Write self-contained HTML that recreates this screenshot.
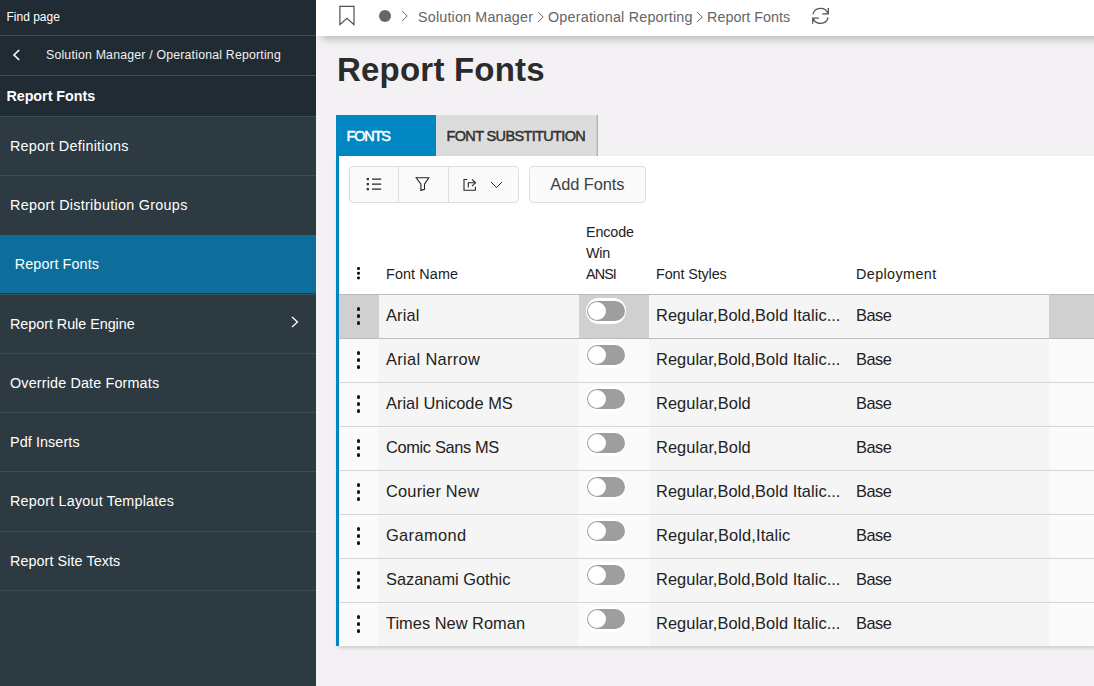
<!DOCTYPE html>
<html lang="en">
<head>
<meta charset="utf-8">
<title>Report Fonts</title>
<style>
*{box-sizing:border-box;margin:0;padding:0}
html,body{width:1094px;height:686px;overflow:hidden}
body{position:relative;background:#f3f1f4;font-family:"Liberation Sans",sans-serif;color:#2b2b2b}
.abs{position:absolute}
/* sidebar */
#nav{z-index:5;position:absolute;left:0;top:0;width:316px;height:686px;background:#2d3a42;color:#fff}
#nav .top{position:absolute;left:0;top:0;width:316px;height:116px;background:#212b33}
#nav .ln{position:absolute;left:0;width:316px;height:1px;background:#3a4c56}
#nav .find{position:absolute;left:6.5px;top:10px;font-size:12px;line-height:14px;color:#fff}
#nav .crumb{position:absolute;left:46px;top:46px;font-size:12.3px;line-height:18px;white-space:nowrap;color:#f0f0f0;letter-spacing:.2px}
#nav .ttl{position:absolute;left:6.4px;top:87px;font-size:14.35px;line-height:18px;font-weight:bold;white-space:nowrap;letter-spacing:-.04px}
#nav .it{position:absolute;left:0;width:316px;height:59px;font-size:14.35px;line-height:20px;white-space:nowrap}
#nav .it span{position:absolute;left:10px;top:20px}
#nav .it.act{background:#0d6e9c}
#nav .it.act span{left:14.8px;top:19px}
/* top bar */
#bar{position:absolute;left:316px;top:0;width:778px;height:36px;background:#fff;box-shadow:6px 3px 8px rgba(0,0,0,.25)}
#bar .bc{position:absolute;top:8px;font-size:14.35px;line-height:18px;color:#666;white-space:nowrap;letter-spacing:.25px}
h1{position:absolute;left:337px;top:50px;font-size:33px;line-height:40px;font-weight:bold;color:#2b2b2b;white-space:nowrap;letter-spacing:.21px}
/* tabs */
.tab{position:absolute;top:115px;height:41px;font-size:14.5px;line-height:18px;font-weight:normal;-webkit-text-stroke:.5px currentColor;white-space:nowrap}
.tab span{position:absolute;top:12.4px}
#t1{left:336px;width:100px;background:#0087c2;color:#fff}
#t2{left:436px;width:162px;background:#dcdcdc;color:#333;border-right:1px solid #b4b4b4;box-shadow:inset -1px 0 0 #cdcdcd}
#panel{position:absolute;left:336px;top:156px;width:758px;height:490px;background:#fff;border-left:3px solid #0087c2;box-shadow:2px 2px 4px rgba(0,0,0,.16)}
.btn{position:absolute;top:166px;height:37px;background:#fafafa;border:1px solid #dedede;border-radius:4px}
.btn i{position:absolute;top:0;width:1px;height:35px;background:#dedede}
#add{font-size:16.4px;letter-spacing:-.08px;line-height:20px;color:#404040;white-space:nowrap}
#add span{position:absolute;left:20.3px;top:6.7px}
.th{position:absolute;font-size:14.35px;line-height:21px;color:#222;white-space:nowrap}
.row{position:absolute;left:339px;width:755px;height:44px;background:#f5f5f5;border-top:1px solid #d6d6d6;font-size:16.4px;line-height:20px;white-space:nowrap;color:#222}
.row .k{position:absolute;left:0;top:0;width:40px;height:43px;background:#fafafa}
.row .r{position:absolute;left:710px;top:0;width:45px;height:43px;background:#fafafa}
.row .g{position:absolute;left:240px;top:0;width:70px;height:43px;background:#fafafa}
.row.sel,.row.sel+.row{border-top-color:#bcbcbc}
.row.sel .k,.row.sel .r,.row.sel .g{background:#d0d0d0}
.row b{position:absolute;font-weight:normal;top:10px}
.row em{font-style:normal;letter-spacing:0}
.row .n{left:47px}.row .s{left:317px}.row .d{left:517px;letter-spacing:-.5px}
.dots{position:absolute;left:17.7px;top:12.3px;width:3.8px;height:18px}
.dots u{position:absolute;left:0;width:3.8px;height:3.8px;border-radius:50%;background:#111}
.tg{position:absolute;left:247px;top:3.2px;width:40px;height:25.6px;border-radius:12.8px;background:#fff}
.tg:before{content:"";position:absolute;left:1px;top:2.8px;width:38px;height:20px;border-radius:10px;background:#9e9e9e}
.tg:after{content:"";position:absolute;left:1.8px;top:3.6px;width:18.4px;height:18.4px;border-radius:50%;background:#fff}
</style>
</head>
<body>
<div id="nav">
  <div class="top"></div>
  <div class="find">Find page</div>
  <div class="ln" style="top:35px"></div>
  <svg class="abs" style="left:12px;top:49px" width="9" height="12" viewBox="0 0 9 12"><path d="M7.2 1 L2 6 L7.2 11" fill="none" stroke="#fff" stroke-width="1.6"/></svg>
  <div class="crumb">Solution Manager / Operational Reporting</div>
  <div class="ln" style="top:75px"></div>
  <div class="ttl">Report Fonts</div>
  <div class="it" style="top:116px"><span style="letter-spacing:0.26px">Report Definitions</span></div>
  <div class="it" style="top:175px"><span style="letter-spacing:0.3px">Report Distribution Groups</span></div>
  <div class="it act" style="top:235px;height:58px"><span style="letter-spacing:.11px">Report Fonts</span></div>
  <div class="it" style="top:294px"><span style="letter-spacing:-0.03px">Report Rule Engine</span></div>
  <div class="it" style="top:353px"><span style="letter-spacing:0.16px">Override Date Formats</span></div>
  <div class="it" style="top:412px"><span style="letter-spacing:0.1px">Pdf Inserts</span></div>
  <div class="it" style="top:471px"><span style="letter-spacing:0.21px">Report Layout Templates</span></div>
  <div class="it" style="top:531px"><span style="letter-spacing:0.08px">Report Site Texts</span></div>
  <div class="ln" style="top:116px"></div>
  <div class="ln" style="top:175px"></div>
  <div class="ln" style="top:294px"></div>
  <div class="ln" style="top:353px"></div>
  <div class="ln" style="top:412px"></div>
  <div class="ln" style="top:471px"></div>
  <div class="ln" style="top:531px"></div>
  <div class="ln" style="top:590px"></div>
  <svg class="abs" style="left:290px;top:315px" width="10" height="14" viewBox="0 0 10 14"><path d="M2 2 L7.5 7 L2 12" fill="none" stroke="#fff" stroke-width="1.3"/></svg>
</div>

<div id="bar">
  <svg class="abs" style="left:22px;top:4px" width="18" height="24" viewBox="0 0 18 24"><path d="M1.9 2.3 H16 V20.6 L8.95 14.2 L1.9 20.6 Z" fill="none" stroke="#505050" stroke-width="1.2" stroke-linejoin="miter"/></svg>
  <div class="abs" style="left:62.5px;top:9.8px;width:12.5px;height:12.5px;border-radius:50%;background:#666"></div>
  <svg class="abs chv" style="left:85px;top:10px" width="8" height="12" viewBox="0 0 8 12"><path d="M1.2 1.3 L6.2 6 L1.2 10.7" fill="none" stroke="#666" stroke-width="1"/></svg>
  <div class="bc" style="left:102.1px;letter-spacing:.16px">Solution Manager</div>
  <svg class="abs chv" style="left:220.5px;top:11px" width="8" height="12" viewBox="0 0 8 12"><path d="M1.2 1.3 L6.2 6 L1.2 10.7" fill="none" stroke="#666" stroke-width="1"/></svg>
  <div class="bc" style="left:232px;letter-spacing:.21px">Operational Reporting</div>
  <svg class="abs chv" style="left:380px;top:11px" width="8" height="12" viewBox="0 0 8 12"><path d="M1.2 1.3 L6.2 6 L1.2 10.7" fill="none" stroke="#666" stroke-width="1"/></svg>
  <div class="bc" style="left:391px;letter-spacing:.03px">Report Fonts</div>
  <svg class="abs" style="left:495px;top:7px" width="19" height="18" viewBox="0 0 19 18"><path d="M1.89 7.3 A7.8 7.5 0 0 1 16.97 6.8 M17.3 1.1 V6.85 H11.1 M17.11 10.5 A7.8 7.5 0 0 1 2.03 11 M1.7 16.8 V11.1 H7.9" fill="none" stroke="#555" stroke-width="1.25"/></svg>
</div>

<h1>Report Fonts</h1>

<div class="tab" id="t1"><span style="left:10.5px;letter-spacing:-1.15px">FONTS</span></div>
<div class="tab" id="t2"><span style="left:10.5px;letter-spacing:-.64px">FONT SUBSTITUTION</span></div>
<div id="panel"></div>

<div class="btn" style="left:349px;width:170px"><i style="left:48px"></i><i style="left:98px"></i></div>
<svg class="abs" style="left:349px;top:166px" width="170" height="37" viewBox="349 166 170 37" fill="none" stroke="#262626" stroke-width="1.1">
  <path d="M372 179.15 H381.2 M372 184.1 H381.2 M372 189.1 H381.2" stroke-width="1.25"/>
  <path d="M366.7 178.1 h2.2 v2.2 h-2.2z M366.7 183 h2.2 v2.2 h-2.2z M366.7 188 h2.2 v2.2 h-2.2z" fill="#2e2e2e" stroke="none"/>
  <path d="M416.2 177.7 H428.8 L424.5 184.2 V189.3 L420.9 190.4 V184.2 Z" stroke-linejoin="miter"/>
  <path d="M467.2 179.5 H464 V190.2 H475.4 V186.8"/>
  <path d="M468.3 187.6 V182.8 H475.2"/>
  <path d="M472 179.4 L475.5 182.8 L472 186.2"/>
  <path d="M491 182 L496.5 187.6 L502 182" stroke-width="1"/>
</svg>
<div class="btn" id="add" style="left:529px;width:117px"><span>Add Fonts</span></div>

<div class="abs" style="left:357.3px;top:267px;width:2.6px;height:2.6px;border-radius:50%;background:#111;box-shadow:0 4.7px 0 #111,0 9.4px 0 #111"></div>
<div class="th" style="left:386px;top:263.5px;letter-spacing:.13px">Font Name</div>
<div class="th" style="left:586px;top:221.5px"><span style="letter-spacing:-.12px">Encode</span><br><span style="letter-spacing:-.2px">Win</span><br><span style="letter-spacing:-.9px">ANSI</span></div>
<div class="th" style="left:656px;top:263.5px;letter-spacing:-.1px">Font Styles</div>
<div class="th" style="left:856px;top:263.5px;letter-spacing:.4px">Deployment</div>

<div class="row sel" style="top:294px"><div class="k"></div><div class="g"></div><div class="r"></div><div class="dots"><u style="top:0"></u><u style="top:6.8px"></u><u style="top:13.5px"></u></div><b class="n" style="letter-spacing:0.18px">Arial</b><div class="tg"></div><b class="s" style="letter-spacing:.05px">Regular,Bold,Bold Italic<em>...</em></b><b class="d">Base</b></div>
<div class="row" style="top:338px"><div class="k"></div><div class="g"></div><div class="r"></div><div class="dots"><u style="top:0"></u><u style="top:6.8px"></u><u style="top:13.5px"></u></div><b class="n" style="letter-spacing:0.34px">Arial Narrow</b><div class="tg"></div><b class="s" style="letter-spacing:.05px">Regular,Bold,Bold Italic<em>...</em></b><b class="d">Base</b></div>
<div class="row" style="top:382px"><div class="k"></div><div class="g"></div><div class="r"></div><div class="dots"><u style="top:0"></u><u style="top:6.8px"></u><u style="top:13.5px"></u></div><b class="n" style="letter-spacing:0.01px">Arial Unicode MS</b><div class="tg"></div><b class="s" style="letter-spacing:.08px">Regular,Bold</b><b class="d">Base</b></div>
<div class="row" style="top:426px"><div class="k"></div><div class="g"></div><div class="r"></div><div class="dots"><u style="top:0"></u><u style="top:6.8px"></u><u style="top:13.5px"></u></div><b class="n" style="letter-spacing:-0.35px">Comic Sans MS</b><div class="tg"></div><b class="s" style="letter-spacing:.08px">Regular,Bold</b><b class="d">Base</b></div>
<div class="row" style="top:470px"><div class="k"></div><div class="g"></div><div class="r"></div><div class="dots"><u style="top:0"></u><u style="top:6.8px"></u><u style="top:13.5px"></u></div><b class="n" style="letter-spacing:0.19px">Courier New</b><div class="tg"></div><b class="s" style="letter-spacing:.05px">Regular,Bold,Bold Italic<em>...</em></b><b class="d">Base</b></div>
<div class="row" style="top:514px"><div class="k"></div><div class="g"></div><div class="r"></div><div class="dots"><u style="top:0"></u><u style="top:6.8px"></u><u style="top:13.5px"></u></div><b class="n" style="letter-spacing:0.37px">Garamond</b><div class="tg"></div><b class="s" style="letter-spacing:.12px">Regular,Bold,Italic</b><b class="d">Base</b></div>
<div class="row" style="top:558px"><div class="k"></div><div class="g"></div><div class="r"></div><div class="dots"><u style="top:0"></u><u style="top:6.8px"></u><u style="top:13.5px"></u></div><b class="n" style="letter-spacing:-0.03px">Sazanami Gothic</b><div class="tg"></div><b class="s" style="letter-spacing:.05px">Regular,Bold,Bold Italic<em>...</em></b><b class="d">Base</b></div>
<div class="row" style="top:602px"><div class="k"></div><div class="g"></div><div class="r"></div><div class="dots"><u style="top:0"></u><u style="top:6.8px"></u><u style="top:13.5px"></u></div><b class="n" style="letter-spacing:0.02px">Times New Roman</b><div class="tg"></div><b class="s" style="letter-spacing:.05px">Regular,Bold,Bold Italic<em>...</em></b><b class="d">Base</b></div>
</body>
</html>
